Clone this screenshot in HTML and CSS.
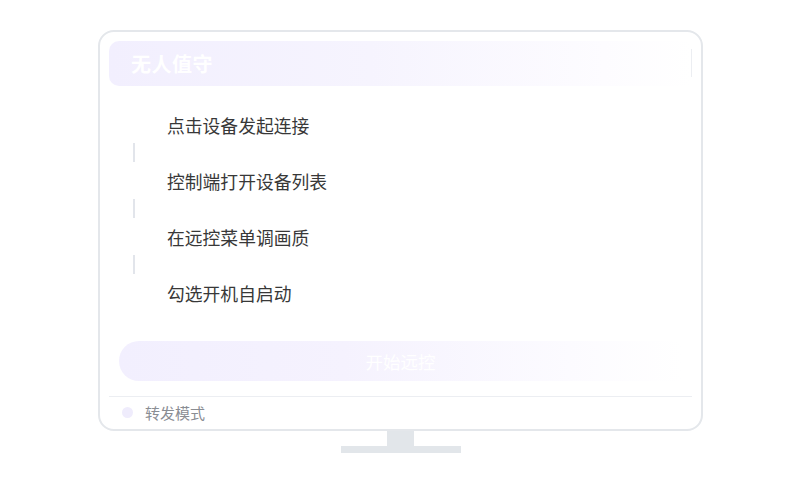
FILE: index.html
```html
<!DOCTYPE html>
<html lang="zh-CN">

<head>
    <meta charset="UTF-8">
    <meta name="viewport" content="width=device-width, initial-scale=1.0">
    <title>无人值守</title>
    <link rel="stylesheet" href="styles.css">
</head>

<body>
    <div class="device">
        <div class="monitor">
            <div class="monitor-head">
                <span class="head-title">无人值守</span>
            </div>
            <ul class="steps">
                <li class="step">点击设备发起连接</li>
                <li class="step-link"><i></i></li>
                <li class="step">控制端打开设备列表</li>
                <li class="step-link"><i></i></li>
                <li class="step">在远控菜单调画质</li>
                <li class="step-link"><i></i></li>
                <li class="step">勾选开机自启动</li>
            </ul>
            <button class="start-btn">开始远控</button>
            <div class="monitor-foot">
                <span class="dot"></span>
                <span class="foot-text">转发模式</span>
            </div>
        </div>
        <div class="stand-neck"></div>
        <div class="stand-base"></div>
    </div>
</body>

</html>
```

FILE: styles.css
```css
* {
    margin: 0;
    padding: 0;
    box-sizing: border-box;
}

body {
    background-color: #fff;
    font-family: "Noto Sans CJK SC", "Noto Sans", sans-serif;
}

.device {
    width: 605px;
    margin: 30px 0 0 98px;
    display: flex;
    flex-direction: column;
    align-items: center;
}

.monitor {
    width: 100%;
    height: 401px;
    border: 2px solid #e4e7eb;
    border-radius: 16px;
    padding: 9px 9px 0;
    display: flex;
    flex-direction: column;
}

.monitor-head {
    position: relative;
    height: 45px;
    border-radius: 10px 0 0 10px;
    background: linear-gradient(90deg, #f2effe 0%, #f6f4fe 45%, #fdfcff 85%, #fff 100%);
    display: flex;
    align-items: center;
    padding-left: 22px;
}

.monitor-head::after {
    content: "";
    position: absolute;
    right: 0;
    top: 8px;
    width: 1px;
    height: 28px;
    background-color: #eceef2;
}

.head-title {
    color: #fff;
    font-size: 20px;
    font-weight: 700;
    letter-spacing: 0.5px;
}

.steps {
    list-style: none;
    margin-top: 25px;
    padding-left: 24px;
}

.step {
    height: 28px;
    line-height: 28px;
    padding-left: 34px;
    font-size: 17.8px;
    color: #383838;
}

.step-link {
    height: 28px;
    padding: 4px 0 5px;
}

.step-link i {
    display: block;
    width: 2px;
    height: 19px;
    background-color: #e2e5eb;
}

.start-btn {
    margin: 34px 10px 0;
    height: 40px;
    border: none;
    border-radius: 20px 0 0 20px;
    background: linear-gradient(90deg, #f2effe 0%, #f5f2fe 40%, #fcfbff 80%, #fff 100%);
    color: #fff;
    font-family: inherit;
    font-size: 17.5px;
}

.monitor-foot {
    margin-top: 15px;
    height: 32px;
    border-top: 1px solid #eceef2;
    display: flex;
    align-items: center;
    padding-left: 13px;
}

.dot {
    width: 11px;
    height: 11px;
    border-radius: 50%;
    background-color: #efecfc;
}

.foot-text {
    margin-left: 12px;
    font-size: 15px;
    color: #8a8d93;
}

.stand-neck {
    width: 27px;
    height: 15px;
    background-color: #e2e6ea;
}

.stand-base {
    width: 120px;
    height: 7px;
    background-color: #e2e6ea;
}
```
